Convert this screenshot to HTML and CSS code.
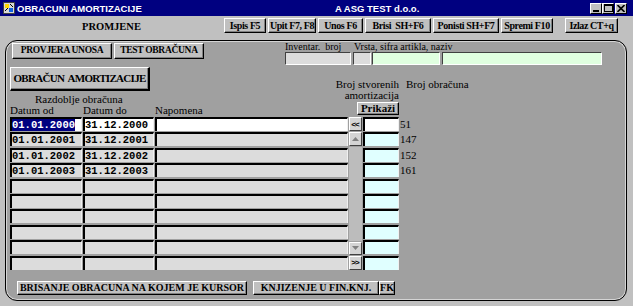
FILE: index.html
```html
<!DOCTYPE html>
<html>
<head>
    <meta charset="UTF-8">
    <title>Obracuni amortizacije</title>
    <link rel="stylesheet" href="styles.css">
</head>
<body>
    <!-- Title bar -->
    <div class="titlebar">
        <svg class="app-icon" viewBox="0 0 12 12">
            <rect x="0.5" y="0.5" width="11" height="11" fill="#d8d8d8" stroke="#404040"/>
            <rect x="2" y="2" width="4" height="4" fill="#ffd800"/>
            <rect x="6" y="6" width="4" height="4" fill="#1060e0"/>
            <path d="M2 9 L5 6 M7 2 L10 5" stroke="#000" stroke-width="1"/>
        </svg>
        <span class="title-main">OBRACUNI AMORTIZACIJE</span>
        <span class="title-company">A ASG TEST d.o.o.</span>
        <div class="win-controls">
            <span class="win-btn">
                <svg width="8" height="7" viewBox="0 0 8 7"><rect x="1" y="5" width="6" height="2" fill="#000"/></svg>
            </span>
            <span class="win-btn">
                <svg width="9" height="8" viewBox="0 0 9 8"><rect x="0.5" y="0.5" width="8" height="7" fill="none" stroke="#000"/><rect x="0" y="0" width="9" height="2" fill="#000"/></svg>
            </span>
            <span class="win-btn win-close">
                <svg width="8" height="7" viewBox="0 0 8 7"><path d="M0.5 0 L7.5 7 M7.5 0 L0.5 7" stroke="#000" stroke-width="1.6"/></svg>
            </span>
        </div>
    </div>

    <!-- Toolbar -->
    <div class="toolbar">
        <div class="toolbar-title">PROMJENE</div>
        <div class="toolbar-buttons">
            <button class="btn tb tb-ispis">Ispis F5</button>
            <button class="btn tb tb-upit">Upit F7, F8</button>
            <button class="btn tb tb-unos">Unos F6</button>
            <button class="btn tb tb-brisi">Brisi&nbsp; SH+F6</button>
            <button class="btn tb tb-ponisti">Ponisti SH+F7</button>
            <button class="btn tb tb-spremi">Spremi F10</button>
            <button class="btn tb tb-izlaz">Izlaz CT+q</button>
        </div>
    </div>

    <!-- Main panel -->
    <div class="panel">
        <div class="top-row">
            <div class="tabs">
                <button class="btn tab tab-check">PROVJERA UNOSA</button>
                <button class="btn tab tab-test">TEST OBRAČUNA</button>
            </div>
            <div class="item-fields">
                <div class="field-labels">
                    <span class="lbl-inv">Inventar.&nbsp; broj</span>
                    <span>Vrsta, sifra artikla, naziv</span>
                </div>
                <div class="field-inputs">
                    <span class="input input-inv"></span>
                    <span class="input input-kind"></span>
                    <span class="input input-code"></span>
                    <span class="input input-name"></span>
                </div>
            </div>
        </div>

        <div class="head">
            <div class="head-left">
                <button class="btn big-btn">OBRAČUN AMORTIZACIJE</button>
                <div class="period">Razdoblje obračuna</div>
                <div class="col-labels">
                    <span class="c1">Datum od</span>
                    <span class="c2">Datum do</span>
                    <span>Napomena</span>
                </div>
            </div>
            <div class="count-block">
                <div class="count-label">Broj stvorenih<br>amortizacija</div>
                <button class="btn show-btn">Prikaži</button>
            </div>
            <div class="calc-label">Broj obračuna</div>
        </div>

        <div class="grid">
            <div class="scroll">
                <span class="sb-btn">&lt;&lt;</span>
                <span class="sb-arrow">
                    <svg width="7" height="4" viewBox="0 0 7 4"><path d="M0 4 L3.5 0 L7 4 Z" fill="#808080"/></svg>
                </span>
                <span class="sb-track"></span>
                <span class="sb-arrow sb-down">
                    <svg width="7" height="4" viewBox="0 0 7 4"><path d="M0 0 L3.5 4 L7 0 Z" fill="#808080"/></svg>
                </span>
                <span class="sb-btn">&gt;&gt;</span>
            </div>

            <div class="cell cell-current date"><span class="sel">01.01.2000</span></div>
            <div class="cell cell-current date">31.12.2000</div>
            <div class="cell cell-current"></div>
            <div class="cell cell-current"></div>
            <div class="num">51</div>

            <div class="cell date">01.01.2001</div>
            <div class="cell date">31.12.2001</div>
            <div class="cell"></div>
            <div class="cell count-cell"></div>
            <div class="num">147</div>

            <div class="cell date">01.01.2002</div>
            <div class="cell date">31.12.2002</div>
            <div class="cell"></div>
            <div class="cell count-cell"></div>
            <div class="num">152</div>

            <div class="cell date">01.01.2003</div>
            <div class="cell date">31.12.2003</div>
            <div class="cell"></div>
            <div class="cell count-cell"></div>
            <div class="num">161</div>

            <div class="cell"></div><div class="cell"></div><div class="cell"></div><div class="cell count-cell"></div><div class="num"></div>
            <div class="cell"></div><div class="cell"></div><div class="cell"></div><div class="cell count-cell"></div><div class="num"></div>
            <div class="cell"></div><div class="cell"></div><div class="cell"></div><div class="cell count-cell"></div><div class="num"></div>
            <div class="cell"></div><div class="cell"></div><div class="cell"></div><div class="cell count-cell"></div><div class="num"></div>
            <div class="cell"></div><div class="cell"></div><div class="cell"></div><div class="cell count-cell"></div><div class="num"></div>
            <div class="cell"></div><div class="cell"></div><div class="cell"></div><div class="cell count-cell"></div><div class="num"></div>
        </div>

        <div class="actions">
            <button class="btn act act-delete">BRISANJE OBRACUNA NA KOJEM JE KURSOR</button>
            <button class="btn act act-book">KNJIZENJE U FIN.KNJ.</button>
            <button class="btn act act-fk">FK</button>
        </div>
    </div>
</body>
</html>
```

FILE: styles.css
```css
* {
    box-sizing: border-box;
}
body {
    margin: 0;
    width: 633px;
    height: 306px;
    overflow: hidden;
    background-color: #c0c0c0;
    font-family: "Liberation Serif", "Times New Roman", serif;
    font-size: 11px;
    color: #000;
}

/* Title bar */
.titlebar {
    height: 16px;
    background-color: #000080;
    color: #fff;
    display: flex;
    align-items: center;
    padding-left: 3px;
    font-family: "Liberation Sans", Arial, sans-serif;
    font-weight: bold;
    font-size: 9.5px;
}
.app-icon {
    width: 12px;
    height: 12px;
}
.title-main {
    margin-left: 2px;
    width: 318px;
}
.win-controls {
    margin-left: auto;
    margin-right: 6px;
    display: flex;
}
.win-btn {
    width: 12px;
    height: 11px;
    background-color: #c0c0c0;
    border: 1px solid;
    border-color: #fff #000 #000 #fff;
    display: flex;
    align-items: center;
    justify-content: center;
}
.win-close {
    margin-left: 1px;
}

/* Toolbar */
.toolbar {
    height: 24px;
    display: flex;
    align-items: flex-start;
    padding-top: 2px;
    padding-left: 82px;
}
.toolbar-title {
    width: 142px;
    font-weight: bold;
    font-size: 10.5px;
    line-height: 12px;
    padding-top: 3px;
}
.toolbar-buttons {
    display: flex;
    gap: 2px;
}
.btn {
    font-family: inherit;
    font-weight: bold;
    font-size: 10px;
    line-height: 1;
    color: #000;
    background-color: #c0c0c0;
    border: 1px solid;
    border-color: #fff #000 #000 #fff;
    box-shadow: inset -1px -1px 0 #808080;
    padding: 0;
    display: flex;
    align-items: center;
    justify-content: center;
    white-space: nowrap;
}
.tb {
    height: 15px;
    letter-spacing: -0.4px;
}
.tb-ispis { width: 42px; }
.tb-upit { width: 48px; }
.tb-unos { width: 45px; }
.tb-brisi { width: 66px; }
.tb-ponisti { width: 66px; }
.tb-spremi { width: 52px; }
.tb-izlaz {
    width: 53px;
    margin-left: 10px;
}

/* Panel */
.panel {
    margin-left: 5px;
    width: 622px;
    height: 261px;
    border: 1px solid #000;
    border-radius: 12px;
    background-color: #a0a0a0;
    box-shadow: inset 0 0 0 1px #d4d4d4;
    padding: 2px 0 0 4px;
}
.top-row {
    display: flex;
    align-items: flex-start;
}
.tabs {
    display: flex;
    gap: 2px;
    margin-left: 2px;
}
.tab {
    height: 16px;
    font-size: 9.5px;
    letter-spacing: -0.3px;
}
.tab-check { width: 100px; }
.tab-test { width: 90px; }
.item-fields {
    margin-left: 81px;
    margin-top: -1px;
}
.field-labels {
    display: flex;
    font-size: 10px;
    line-height: 10px;
    height: 10px;
}
.lbl-inv {
    width: 69px;
}
.field-inputs {
    display: flex;
    height: 13px;
}
.input {
    height: 13px;
    border: 1px solid;
    border-color: #404040 #fff #fff #404040;
    background-color: #dcdcdc;
}
.input-inv { width: 66px; }
.input-kind {
    width: 18px;
    margin-left: 2px;
}
.input-code {
    width: 68px;
    margin-left: 1px;
    background-color: #e0ffe0;
}
.input-name {
    width: 160px;
    margin-left: 2px;
    background-color: #e0ffe0;
}

/* Header above the grid */
.head {
    display: flex;
    margin-top: 2px;
}
.head-left {
    flex: 0 0 319px;
}
.big-btn {
    width: 140px;
    height: 24px;
    font-size: 11px;
    letter-spacing: -0.7px;
    word-spacing: 2px;
    border-width: 1px 2px 2px 1px;
}
.period {
    margin-left: 25px;
    margin-top: 3px;
    line-height: 11px;
}
.col-labels {
    display: flex;
    line-height: 11px;
    white-space: nowrap;
}
.col-labels .c1 { width: 73px; }
.col-labels .c2 { width: 72px; }
.count-block {
    display: block;
    flex: 0 0 70px;
    align-self: flex-end;
    text-align: right;
}
.count-label {
    line-height: 11px;
    white-space: nowrap;
}
.show-btn {
    width: 42px;
    height: 13px;
    margin: 1px 0 1px auto;
    font-size: 11px;
}
.calc-label {
    flex: 0 0 auto;
    margin-left: 7px;
    align-self: flex-end;
    margin-bottom: 26px;
    line-height: 11px;
    white-space: nowrap;
}

/* Grid */
.grid {
    display: grid;
    margin-top: 1px;
    grid-template-columns: 72px 71px 193px 13px 36px 40px;
    grid-template-rows: repeat(10, 14px);
    column-gap: 1px;
    row-gap: 1.4px;
}
.cell {
    background-color: #dcdcdc;
    border-top: 2px solid #000;
    border-left: 2px solid #000;
    border-right: 1px solid #f0f0f0;
}
.cell-current {
    background-color: #fff;
}
.count-cell {
    background-color: #e0ffff;
}
.date {
    font-family: "Liberation Mono", "Courier New", monospace;
    font-weight: bold;
    font-size: 10.5px;
    line-height: 12px;
}
.sel {
    display: inline-block;
    background-color: #000080;
    color: #fff;
}
.num {
    line-height: 14px;
    font-size: 11px;
}
.scroll {
    grid-column: 4;
    grid-row: 1 / 11;
    display: flex;
    flex-direction: column;
    gap: 1px;
}
.sb-btn,
.sb-arrow {
    height: 14px;
    background-color: #d4d4d4;
    border: 1px solid;
    border-color: #fff #404040 #404040 #fff;
    display: flex;
    align-items: center;
    justify-content: center;
}
.sb-btn {
    font-family: "Liberation Sans", Arial, sans-serif;
    font-weight: bold;
    font-size: 8px;
    letter-spacing: -1px;
    padding-right: 1px;
}
.sb-down {
    height: 13px;
}
.sb-track {
    flex: 1;
    background-color: #bcbcbc;
}

/* Bottom actions */
.actions {
    display: flex;
    margin-top: 11px;
    padding-left: 7px;
}
.act {
    height: 14px;
}
.act-delete { width: 230px; }
.act-book {
    width: 126px;
    margin-left: 6px;
}
.act-fk { width: 16px; }
```
